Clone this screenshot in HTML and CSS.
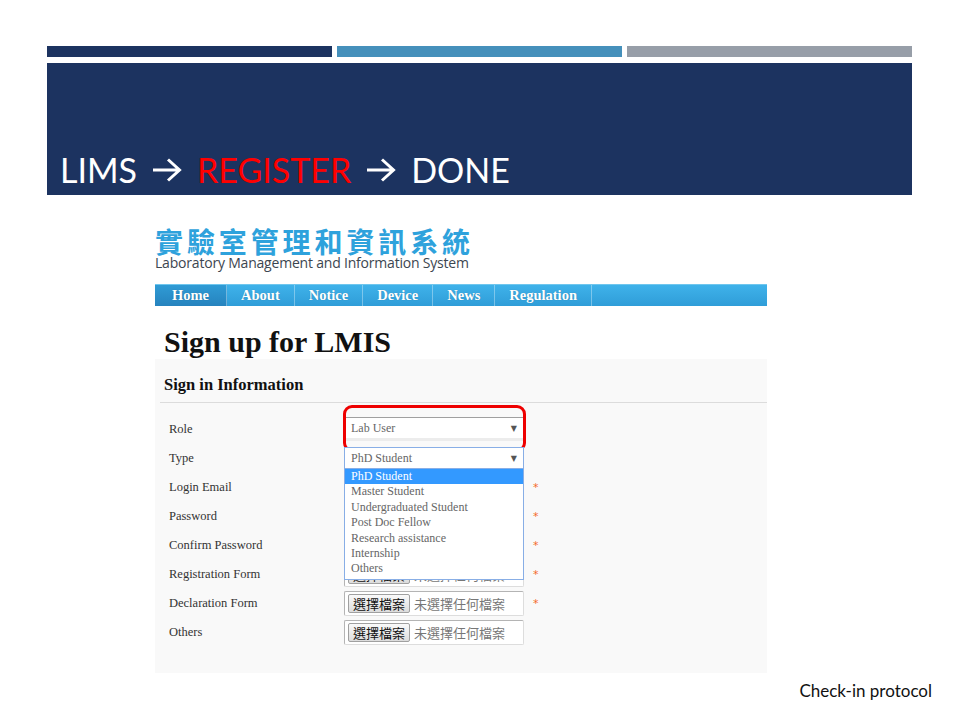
FILE: index.html
```html
<!DOCTYPE html>
<html lang="zh-Hant">
<head>
    <meta charset="UTF-8">
    <meta name="viewport" content="width=device-width, initial-scale=1.0">
    <link rel="stylesheet" href="styles.css">
    <title>LIMS - Register</title>
</head>
<body>

    <div class="bars">
        <span class="bar navy"></span>
        <span class="bar teal"></span>
        <span class="bar grey"></span>
    </div>

    <header class="title-box">
        <h1>
            LIMS
            <svg class="arrow" viewBox="0 0 30 24" width="30" height="24"><path d="M1 12 H27 M16 1.5 L27.5 12 L16 22.5" fill="none" stroke="#fff" stroke-width="3"/></svg>
            <span class="hl">REGISTER</span>
            <svg class="arrow" viewBox="0 0 30 24" width="30" height="24"><path d="M1 12 H27 M16 1.5 L27.5 12 L16 22.5" fill="none" stroke="#fff" stroke-width="3"/></svg>
            DONE
        </h1>
    </header>

    <div class="shot">
        <div class="logo">
            <div class="logo-zh">實驗室管理和資訊系統</div>
            <div class="logo-en">Laboratory Management and Information System</div>
        </div>

        <ul class="nav">
            <li class="active">Home</li>
            <li>About</li>
            <li>Notice</li>
            <li>Device</li>
            <li>News</li>
            <li>Regulation</li>
        </ul>

        <h2 class="page-title">Sign up for LMIS</h2>

        <div class="panel">
            <div class="panel-head">Sign in Information</div>

            <div class="form">
                <div class="row">
                    <label>Role</label>
                    <div class="control">
                        <div class="select role">Lab User<span class="caret">&#9660;</span></div>
                        <div class="highlight"></div>
                    </div>
                </div>
                <div class="row">
                    <label>Type</label>
                    <div class="control">
                        <div class="select focus">PhD Student<span class="caret">&#9660;</span></div>
                        <ul class="dropdown">
                            <li class="selected">PhD Student</li>
                            <li>Master Student</li>
                            <li>Undergraduated Student</li>
                            <li>Post Doc Fellow</li>
                            <li>Research assistance</li>
                            <li>Internship</li>
                            <li>Others</li>
                        </ul>
                    </div>
                </div>
                <div class="row">
                    <label>Login Email</label>
                    <div class="control"><div class="text-input"></div></div>
                    <span class="req">*</span>
                </div>
                <div class="row">
                    <label>Password</label>
                    <div class="control"><div class="text-input"></div></div>
                    <span class="req">*</span>
                </div>
                <div class="row">
                    <label>Confirm Password</label>
                    <div class="control"><div class="text-input"></div></div>
                    <span class="req">*</span>
                </div>
                <div class="row">
                    <label>Registration Form</label>
                    <div class="control">
                        <div class="file"><span class="file-btn">選擇檔案</span><span class="file-none">未選擇任何檔案</span></div>
                    </div>
                    <span class="req">*</span>
                </div>
                <div class="row">
                    <label>Declaration Form</label>
                    <div class="control">
                        <div class="file"><span class="file-btn">選擇檔案</span><span class="file-none">未選擇任何檔案</span></div>
                    </div>
                    <span class="req">*</span>
                </div>
                <div class="row">
                    <label>Others</label>
                    <div class="control">
                        <div class="file"><span class="file-btn">選擇檔案</span><span class="file-none">未選擇任何檔案</span></div>
                    </div>
                </div>
            </div>
        </div>
    </div>

    <footer class="footer">Check-in protocol</footer>

</body>
</html>
```

FILE: styles.css
```css
body {
    margin: 0;
    width: 960px;
    height: 720px;
    background-color: #fff;
    font-family: 'Liberation Serif', 'Noto Sans CJK TC', serif;
    overflow: hidden;
}

/* slide decoration */
.bars {
    display: flex;
    gap: 5px;
    margin: 46px 48px 0 47px;
}

.bar {
    flex: 1;
    height: 11px;
}

.bar.navy { background-color: #1c3360; }
.bar.teal { background-color: #4590bb; }
.bar.grey { background-color: #979ea8; }

.title-box {
    display: flex;
    align-items: flex-end;
    height: 132px;
    margin: 6px 48px 0 47px;
    background-color: #1c3360;
}

h1 {
    display: flex;
    align-items: center;
    gap: 15px;
    margin: 0 0 5px 13px;
    font-family: 'Lato', 'Open Sans', sans-serif;
    font-weight: 400;
    font-size: 34px;
    line-height: 40px;
    color: #fff;
}

h1 .hl {
    color: #ff0000;
}

h1 .arrow {
    flex: none;
}

/* the web page screenshot */
.shot {
    width: 612px;
    margin-left: 155px;
}

.logo {
    margin-top: 32px;
}

.logo-zh {
    font-family: 'Noto Sans CJK TC', sans-serif;
    font-weight: 700;
    font-size: 28px;
    line-height: 28px;
    letter-spacing: 3.9px;
    color: #2ea2dc;
}

.logo-en {
    font-family: 'Open Sans', sans-serif;
    font-size: 14px;
    line-height: 16px;
    letter-spacing: -0.2px;
    color: #3c4650;
}

.nav {
    display: flex;
    height: 22px;
    margin: 13px 0 0;
    padding: 0;
    list-style: none;
    background: linear-gradient(#3fb2ea, #2f9dd8);
    border-top: 1px solid #6fc6ee;
    box-sizing: border-box;
}

.nav li {
    padding: 0 14px;
    font-weight: 700;
    font-size: 14.5px;
    line-height: 21px;
    color: #fff;
    text-shadow: 0 0 1px rgba(0, 0, 0, 0.25);
    border-right: 1px solid rgba(255, 255, 255, 0.35);
}

.nav li.active {
    padding: 0 17px;
    background: linear-gradient(#2f9bd5, #2683be);
}

.page-title {
    margin: 19px 0 0 9px;
    font-size: 30px;
    line-height: 34px;
    font-weight: 700;
    color: #111;
}

.panel {
    height: 314px;
    background-color: #f9f9f9;
    box-sizing: border-box;
}

.panel-head {
    margin-left: 5px;
    padding: 16px 0 7px 4px;
    font-weight: 700;
    font-size: 16.5px;
    line-height: 20px;
    color: #111;
    border-bottom: 1px solid #dcdcdc;
}

.form {
    display: flex;
    flex-direction: column;
    gap: 5px;
    padding: 14px 0 0 14px;
}

.row {
    display: flex;
    align-items: center;
    height: 24px;
}

.row label {
    width: 175px;
    font-size: 12.5px;
    color: #333;
}

.control {
    position: relative;
    width: 180px;
}

.req {
    margin: 0 0 0 9px;
    font-family: 'DejaVu Sans', sans-serif;
    font-size: 11px;
    color: #f46a2a;
}

.select {
    display: flex;
    align-items: center;
    justify-content: space-between;
    height: 24px;
    padding: 0 6px 0 6px;
    font-size: 12px;
    color: #666;
    background-color: #fff;
    border: 1px solid #bdbdbd;
    border-top-color: #a0a0a0;
    border-bottom: 3px solid #ececec;
    box-sizing: border-box;
}

.select.focus {
    height: 22px;
    border: 1px solid #88aee6;
}

.caret {
    font-family: 'DejaVu Sans', sans-serif;
    font-size: 8px;
    color: #555;
}

.highlight {
    position: absolute;
    left: -1px;
    top: -12px;
    width: 183px;
    height: 47px;
    border: 3px solid #ee0000;
    border-radius: 9px;
    box-sizing: border-box;
}

.dropdown {
    position: absolute;
    top: 22px;
    left: 0;
    z-index: 2;
    width: 180px;
    margin: 0;
    padding: 0 0 2px;
    list-style: none;
    background-color: #fff;
    border: 1px solid #88aee6;
    border-top: none;
    box-sizing: border-box;
}

.dropdown li {
    padding-left: 6px;
    font-size: 12px;
    line-height: 15.4px;
    color: #666;
}

.dropdown li.selected {
    background-color: #3399ff;
    color: #fff;
}

.text-input {
    height: 24px;
    background-color: #fff;
    border: 1px solid #ccc;
    box-sizing: border-box;
}

.file {
    display: flex;
    align-items: center;
    height: 25px;
    padding: 0 3px;
    background-color: #fff;
    border: 1px solid #ddd;
    border-top-color: #b4b4b4;
    border-left-color: #b4b4b4;
    border-radius: 2px;
    box-sizing: border-box;
}

.file-btn {
    padding: 0 4px;
    font-family: 'Noto Sans CJK TC', sans-serif;
    font-size: 13px;
    line-height: 17px;
    color: #111;
    background: linear-gradient(#fafafa, #dcdcdc);
    border: 1px solid #a0a0a0;
    border-radius: 2px;
}

.file-none {
    margin-left: 4px;
    font-family: 'Noto Sans CJK TC', sans-serif;
    font-size: 13px;
    color: #777;
}

.footer {
    margin-top: 8px;
    padding-right: 28px;
    text-align: right;
    font-family: 'Lato', 'Open Sans', sans-serif;
    font-size: 17px;
    line-height: 20px;
    color: #111;
}
```
